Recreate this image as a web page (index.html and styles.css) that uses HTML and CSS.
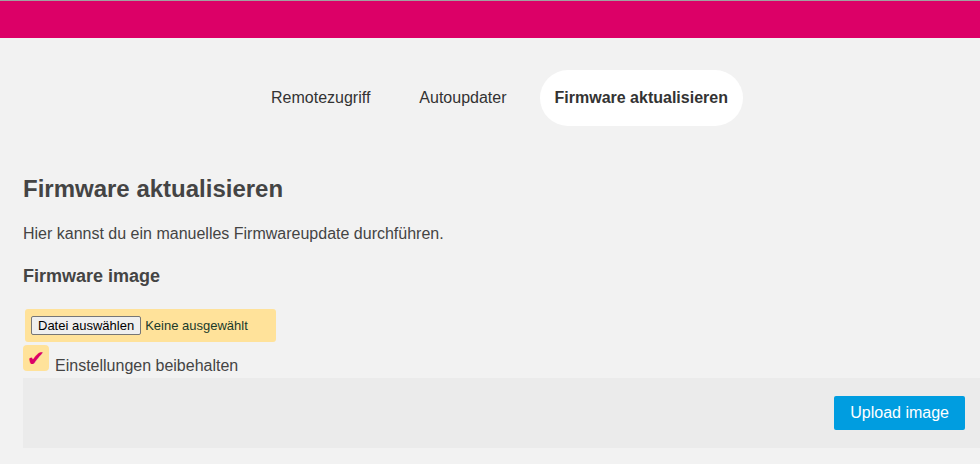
FILE: index.html
```html
<!DOCTYPE html>
<html lang="de">
<head>
<meta charset="utf-8">
<title>Firmware aktualisieren</title>
<link rel="stylesheet" href="styles.css">
</head>
<body>
<header class="topbar"></header>
<nav class="tabs">
  <a class="tab">Remotezugriff</a>
  <a class="tab">Autoupdater</a>
  <a class="tab active">Firmware aktualisieren</a>
</nav>
<main class="content">
  <h2 class="title">Firmware aktualisieren</h2>
  <p class="intro">Hier kannst du ein manuelles Firmwareupdate durchführen.</p>
  <h3 class="subtitle">Firmware image</h3>
  <div class="file-field">
    <span class="file-btn">Datei auswählen</span>
    <span class="file-name">Keine ausgewählt</span>
  </div>
  <label class="check-row">
    <span class="check-box">✔</span>
    <span class="check-label">Einstellungen beibehalten</span>
  </label>
  <div class="actions">
    <button class="upload">Upload image</button>
  </div>
</main>
</body>
</html>
```
FILE: styles.css
```css
* { box-sizing: border-box; }
html, body { margin: 0; padding: 0; }
body {
  background: #f2f2f2;
  font-family: "Liberation Sans", Arial, sans-serif;
  color: #444;
  overflow: hidden;
}
.topbar {
  height: 38px;
  background: #dc0067;
  border-top: 1px solid #a0a0a0;
}
.tabs {
  display: flex;
  justify-content: center;
  gap: 17px;
  margin-top: 32px;
  padding-left: 18px;
}
.tab {
  display: flex;
  align-items: center;
  height: 56px;
  padding: 0 16px;
  border-radius: 28px;
  font-size: 16px;
  color: #333;
}
.tab.active {
  background: #fff;
  font-weight: bold;
  padding: 0 15px;
}
.content {
  padding-left: 23px;
}
.title {
  margin: 49px 0 0;
  font-size: 24px;
  font-weight: bold;
  color: #444;
}
.intro {
  margin: 22px 0 0;
  font-size: 16px;
}
.subtitle {
  margin: 23px 0 0;
  font-size: 18px;
  font-weight: bold;
}
.file-field {
  display: flex;
  align-items: center;
  gap: 4px;
  width: 251px;
  height: 33px;
  margin: 22px 0 0 2px;
  padding: 0 6px;
  background: #ffe29a;
  border-radius: 3px;
  font-size: 13px;
}
.file-btn {
  display: flex;
  align-items: center;
  height: 19px;
  padding: 0 6px;
  background: #efefef;
  border: 1px solid #767676;
  border-radius: 2px;
  color: #000;
}
.file-name { color: #1a3a2a; }
.check-row {
  display: flex;
  align-items: flex-end;
  gap: 6px;
  margin-top: 3px;
}
.check-box {
  display: flex;
  align-items: center;
  justify-content: center;
  width: 26px;
  height: 26px;
  padding-top: 2px;
  background: #ffe29a;
  border-radius: 4px;
  color: #dc0067;
  font-size: 22px;
  line-height: 1;
  font-family: "DejaVu Sans", sans-serif;
}
.check-label {
  font-size: 16px;
  line-height: 18px;
  margin-bottom: -4px;
}
.actions {
  display: flex;
  justify-content: flex-end;
  align-items: center;
  height: 70px;
  margin-top: 7px;
  padding-right: 15px;
  background: #ebebeb;
}
.upload {
  height: 34px;
  padding: 0 16px;
  border: none;
  border-radius: 2px;
  background: #009de0;
  color: #fff;
  font-family: "Liberation Sans", Arial, sans-serif;
  font-size: 16px;
}
```
